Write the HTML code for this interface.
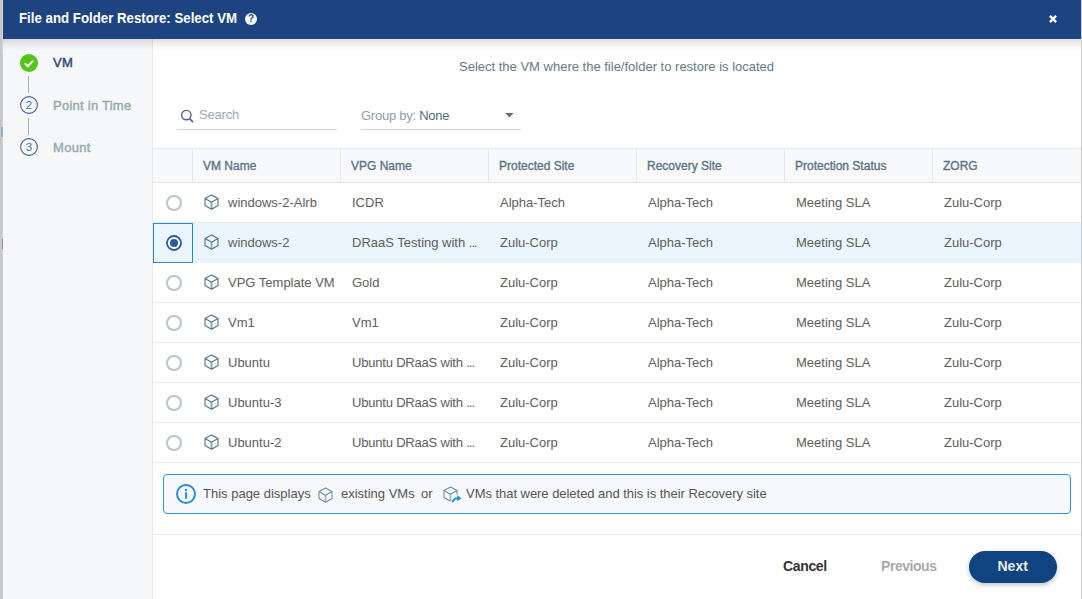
<!DOCTYPE html>
<html><head><meta charset="utf-8">
<style>
*{box-sizing:border-box;margin:0;padding:0}
html,body{width:1082px;height:599px;overflow:hidden;background:#c9c9c9;font-family:"Liberation Sans",sans-serif}
.abs{position:absolute}
.t{position:absolute;white-space:nowrap;line-height:1}
.bgl{position:absolute;left:0;top:0;width:3px;height:599px;background:#c8c8c8}
.dlg{position:absolute;left:3px;top:0;width:1078px;height:599px;background:#fff;overflow:hidden}
.hdr{position:absolute;left:0;top:0;width:1078px;height:39px;background:#1d4380;color:#fff}
.title{left:16px;top:10px;font-size:15px;font-weight:bold;color:#fff;transform:scaleX(0.884);transform-origin:0 0}
.help{position:absolute;left:242px;top:13px;width:12px;height:12px;border-radius:50%;background:#fff;color:#1d4380;font-size:10px;font-weight:bold;text-align:center;line-height:12px}
.close{position:absolute;left:1043px;top:12px}
.side{position:absolute;left:0;top:39px;width:150px;height:560px;background:#f6f7f9;border-right:1px solid #e6eaef}
.shadow{position:absolute;left:0;top:39px;width:1078px;height:12px;background:linear-gradient(rgba(0,0,0,0.13),rgba(0,0,0,0.05) 45%,rgba(0,0,0,0))}
.main{position:absolute;left:150px;top:0;width:928px;height:599px}
.sub{top:60px;left:306px;font-size:13px;color:#647a88}
.uline{position:absolute;height:1px;background:#c9d4de}
.th{position:absolute;top:148px;height:35px;background:#f7f9fb;border-top:1px solid #e3e8ee;border-bottom:1px solid #e3e8ee}
.thd{position:absolute;top:149px;width:1px;height:33px;background:#e3e8ee}
.htx{top:160px;font-size:12px;color:#5b7484;-webkit-text-stroke:0.35px #5b7484}
.row{position:absolute;left:0;width:928px;height:40px;border-bottom:1px solid #e6ebf0}
.rad{position:absolute;left:12.5px;top:12px;width:16px;height:16px;border-radius:50%;border:2px solid #b6c4cc;background:#fff}
.cell{position:absolute;top:13px;font-size:13px;color:#5e5e5e;white-space:nowrap;line-height:1}
.cube{position:absolute;left:50.5px;top:11px}
.sel{background:#eaf5fd;border-bottom-color:#eaf5fd}
.selb{position:absolute;left:0;top:0;width:40px;height:40px;border:1px solid #2387e0}
.c1{left:75px}.c2{left:199px}.c3{left:347px}.c4{left:495px}.c5{left:643px}.c6{left:791px}
</style></head><body>
<svg width="0" height="0" style="position:absolute"><defs><g id="cb"><path d="M7.5 8.3V15" stroke="#90a8b6" stroke-width="1.9"/><path d="M7.5 0.9L14 4.6V11.5L7.5 15.2L1 11.5V4.6Z M1 4.6L7.5 8.3L14 4.6" fill="none" stroke="#4f7389" stroke-width="1.1" stroke-linejoin="round"/></g></defs></svg>
<div class="bgl"></div><div class="abs" style="left:2px;top:0;width:1px;height:599px;background:#d2d2d2"></div><div class="abs" style="left:1px;top:127px;width:2px;height:10px;background:#8fb3cc"></div><div class="abs" style="left:2px;top:239px;width:1px;height:10px;background:#a08a98"></div>
<div class="dlg">
  <div class="hdr">
    <div class="t title">File and Folder Restore: Select VM</div>
    <div class="help">?</div>
    <svg class="close" width="14" height="14" viewBox="0 0 14 14"><path d="M3.9 3.9L10.1 10.1M10.1 3.9L3.9 10.1" stroke="#fff" stroke-width="2.3"/></svg>
  </div>
  <div class="side">
    <svg class="abs" style="left:16.6px;top:15px" width="18" height="18" viewBox="0 0 18 18"><circle cx="9" cy="9" r="9" fill="#52c41a"/><path d="M4.8 9.2L7.8 12.2L13.2 6.6" fill="none" stroke="#fff" stroke-width="2"/></svg>
    <div class="t" style="left:50px;top:17px;font-size:13px;color:#2f4c74;letter-spacing:0.3px;-webkit-text-stroke:0.45px #2f4c74">VM</div>
    <div class="abs" style="left:25px;top:37px;width:1px;height:17px;background:#a3b1c0"></div>
    <svg class="abs" style="left:16.6px;top:57px" width="18" height="18" viewBox="0 0 18 18"><circle cx="9" cy="9" r="8.4" fill="none" stroke="#3f63a0" stroke-width="1.1"/><text x="9" y="13.1" text-anchor="middle" font-size="11.5" fill="#4d6da3" font-family="Liberation Sans">2</text></svg>
    <div class="t" style="left:50px;top:60px;font-size:13px;color:#98a9b2;letter-spacing:0.25px;-webkit-text-stroke:0.45px #98a9b2">Point in Time</div>
    <div class="abs" style="left:25px;top:79px;width:1px;height:17px;background:#a3b1c0"></div>
    <svg class="abs" style="left:16.6px;top:99px" width="18" height="18" viewBox="0 0 18 18"><circle cx="9" cy="9" r="8.4" fill="none" stroke="#3f63a0" stroke-width="1.1"/><text x="9" y="13.1" text-anchor="middle" font-size="11.5" fill="#4d6da3" font-family="Liberation Sans">3</text></svg>
    <div class="t" style="left:50px;top:102px;font-size:13px;color:#98a9b2;letter-spacing:0.3px;-webkit-text-stroke:0.45px #98a9b2">Mount</div>
  </div>
  <div class="main">
    <div class="t sub">Select the VM where the file/folder to restore is located</div>
    <!-- search -->
    <svg class="abs" style="left:25.5px;top:109px" width="16" height="16" viewBox="0 0 16 16"><circle cx="7.3" cy="6.1" r="4.7" fill="none" stroke="#52629a" stroke-width="1.4"/><path d="M10.6 9.6L14 13.2" stroke="#52629a" stroke-width="1.7"/></svg>
    <div class="t" style="left:46px;top:108px;font-size:13px;color:#9aaab3;letter-spacing:-0.2px">Search</div>
    <div class="uline" style="left:24px;top:129px;width:160px"></div>
    <div class="t" style="left:208px;top:109px;font-size:13px;color:#8aa0ab;letter-spacing:-0.25px">Group by: <span style="color:#4f6d7b">None</span></div>
    <svg class="abs" style="left:351.5px;top:112.5px" width="9" height="5" viewBox="0 0 9 5"><path d="M0.2 0H8.6L4.4 4.4Z" fill="#6b6b6b"/></svg>
    <div class="uline" style="left:208px;top:129px;width:160px"></div>
  </div>
  <!-- table -->
  <div class="abs" style="left:150px;top:0;width:928px;height:599px">
    <div class="th" style="left:0;width:928px"></div>
    <div class="thd" style="left:39px"></div>
    <div class="thd" style="left:187px"></div>
    <div class="thd" style="left:335px"></div>
    <div class="thd" style="left:483px"></div>
    <div class="thd" style="left:631px"></div>
    <div class="thd" style="left:779px"></div>
    <div class="t htx" style="left:50px">VM Name</div>
    <div class="t htx" style="left:198px">VPG Name</div>
    <div class="t htx" style="left:346px">Protected Site</div>
    <div class="t htx" style="left:494px">Recovery Site</div>
    <div class="t htx" style="left:642px">Protection Status</div>
    <div class="t htx" style="left:790px">ZORG</div>
    <div class="row" style="top:183px">
<div class="rad"></div>
<svg class="cube" width="15" height="16" viewBox="0 0 15 16"><use href="#cb"/></svg>
<div class="cell c1">windows-2-Alrb</div><div class="cell c2">ICDR</div><div class="cell c3">Alpha-Tech</div><div class="cell c4">Alpha-Tech</div><div class="cell c5">Meeting SLA</div><div class="cell c6">Zulu-Corp</div>
</div>
<div class="row sel" style="top:223px">
<div class="selb"></div><svg class="abs" style="left:12.5px;top:12px" width="16" height="16" viewBox="0 0 16 16"><circle cx="8" cy="8" r="7" fill="#fff" stroke="#2a5a9a" stroke-width="1.8"/><circle cx="8" cy="8" r="4" fill="#2a5a9a"/></svg>
<svg class="cube" width="15" height="16" viewBox="0 0 15 16"><use href="#cb"/></svg>
<div class="cell c1">windows-2</div><div class="cell c2">DRaaS Testing with <span style="letter-spacing:-1px">...</span></div><div class="cell c3">Zulu-Corp</div><div class="cell c4">Alpha-Tech</div><div class="cell c5">Meeting SLA</div><div class="cell c6">Zulu-Corp</div>
</div>
<div class="row" style="top:263px">
<div class="rad"></div>
<svg class="cube" width="15" height="16" viewBox="0 0 15 16"><use href="#cb"/></svg>
<div class="cell c1">VPG Template VM</div><div class="cell c2">Gold</div><div class="cell c3">Zulu-Corp</div><div class="cell c4">Alpha-Tech</div><div class="cell c5">Meeting SLA</div><div class="cell c6">Zulu-Corp</div>
</div>
<div class="row" style="top:303px">
<div class="rad"></div>
<svg class="cube" width="15" height="16" viewBox="0 0 15 16"><use href="#cb"/></svg>
<div class="cell c1">Vm1</div><div class="cell c2">Vm1</div><div class="cell c3">Zulu-Corp</div><div class="cell c4">Alpha-Tech</div><div class="cell c5">Meeting SLA</div><div class="cell c6">Zulu-Corp</div>
</div>
<div class="row" style="top:343px">
<div class="rad"></div>
<svg class="cube" width="15" height="16" viewBox="0 0 15 16"><use href="#cb"/></svg>
<div class="cell c1">Ubuntu</div><div class="cell c2" style="letter-spacing:-0.2px">Ubuntu DRaaS with <span style="letter-spacing:-1px">...</span></div><div class="cell c3">Zulu-Corp</div><div class="cell c4">Alpha-Tech</div><div class="cell c5">Meeting SLA</div><div class="cell c6">Zulu-Corp</div>
</div>
<div class="row" style="top:383px">
<div class="rad"></div>
<svg class="cube" width="15" height="16" viewBox="0 0 15 16"><use href="#cb"/></svg>
<div class="cell c1">Ubuntu-3</div><div class="cell c2" style="letter-spacing:-0.2px">Ubuntu DRaaS with <span style="letter-spacing:-1px">...</span></div><div class="cell c3">Zulu-Corp</div><div class="cell c4">Alpha-Tech</div><div class="cell c5">Meeting SLA</div><div class="cell c6">Zulu-Corp</div>
</div>
<div class="row" style="top:423px">
<div class="rad"></div>
<svg class="cube" width="15" height="16" viewBox="0 0 15 16"><use href="#cb"/></svg>
<div class="cell c1">Ubuntu-2</div><div class="cell c2" style="letter-spacing:-0.2px">Ubuntu DRaaS with <span style="letter-spacing:-1px">...</span></div><div class="cell c3">Zulu-Corp</div><div class="cell c4">Alpha-Tech</div><div class="cell c5">Meeting SLA</div><div class="cell c6">Zulu-Corp</div>
</div>

  </div>
  <!-- info -->
  <div class="abs" style="left:160px;top:474px;width:908px;height:40px;border:1px solid #3094e6;border-radius:4px;background:#f6f8fb"></div>
  <svg class="abs" style="left:173px;top:484px" width="20" height="20" viewBox="0 0 20 20"><circle cx="10" cy="10" r="9" fill="none" stroke="#2189e4" stroke-width="1.9"/><circle cx="10" cy="6" r="1.2" fill="#2189e4"/><rect x="9.1" y="8.3" width="1.9" height="6.5" fill="#2189e4"/></svg>
  <div class="t" style="left:200px;top:487px;font-size:13px;color:#555">This page displays</div>
  <svg class="abs" style="left:314.7px;top:487px" width="15" height="16" viewBox="0 0 15 16"><path d="M7.5 8.3V15" stroke="#a3b6c2" stroke-width="1.7"/><path d="M7.5 0.9L14 4.6V11.5L7.5 15.2L1 11.5V4.6Z M1 4.6L7.5 8.3L14 4.6" fill="none" stroke="#6d8ea3" stroke-width="1.1" stroke-linejoin="round"/></svg>
  <div class="t" style="left:338px;top:487px;font-size:13px;color:#555">existing VMs</div>
  <div class="t" style="left:418px;top:487px;font-size:13px;color:#555">or</div>
  <svg class="abs" style="left:439.5px;top:485.5px" width="19" height="17" viewBox="0 0 19 17"><path d="M7.5 8.3V15" stroke="#9fb3c0" stroke-width="1.7"/><path d="M14 8.5V4.6L7.5 0.9L1 4.6V11.5L7.5 15.2 M1 4.6L7.5 8.3L14 4.6" fill="none" stroke="#6d8ea3" stroke-width="1.1" stroke-linejoin="round"/><path d="M9.6 16.2Q10.4 12.3 15 12.2" fill="none" stroke="#2c8de3" stroke-width="1.9"/><path d="M14.2 9.3L18.6 12.3L14.2 15.2Z" fill="#2c8de3"/></svg>
  <div class="t" style="left:463px;top:487px;font-size:13px;color:#555;letter-spacing:-0.04px">VMs that were deleted and this is their Recovery site</div>
  <!-- footer -->
  <div class="abs" style="left:150px;top:534px;width:928px;height:1px;background:#e8e8e8"></div>
  <div class="t" style="left:780px;top:559px;font-size:14px;font-weight:bold;color:#333;letter-spacing:-0.35px">Cancel</div>
  <div class="t" style="left:878px;top:559px;font-size:14px;font-weight:bold;color:#a9a9a9;letter-spacing:-0.45px">Previous</div>
  <div class="abs" style="left:966px;top:551px;width:88px;height:32px;border-radius:16px;background:#0f4481;box-shadow:0 2px 5px rgba(0,0,0,0.25)"></div>
  <div class="t" style="left:994.5px;top:559px;font-size:14px;font-weight:bold;color:#e8edf4">Next</div>
  <div class="shadow"></div>
</div>

</body></html>
